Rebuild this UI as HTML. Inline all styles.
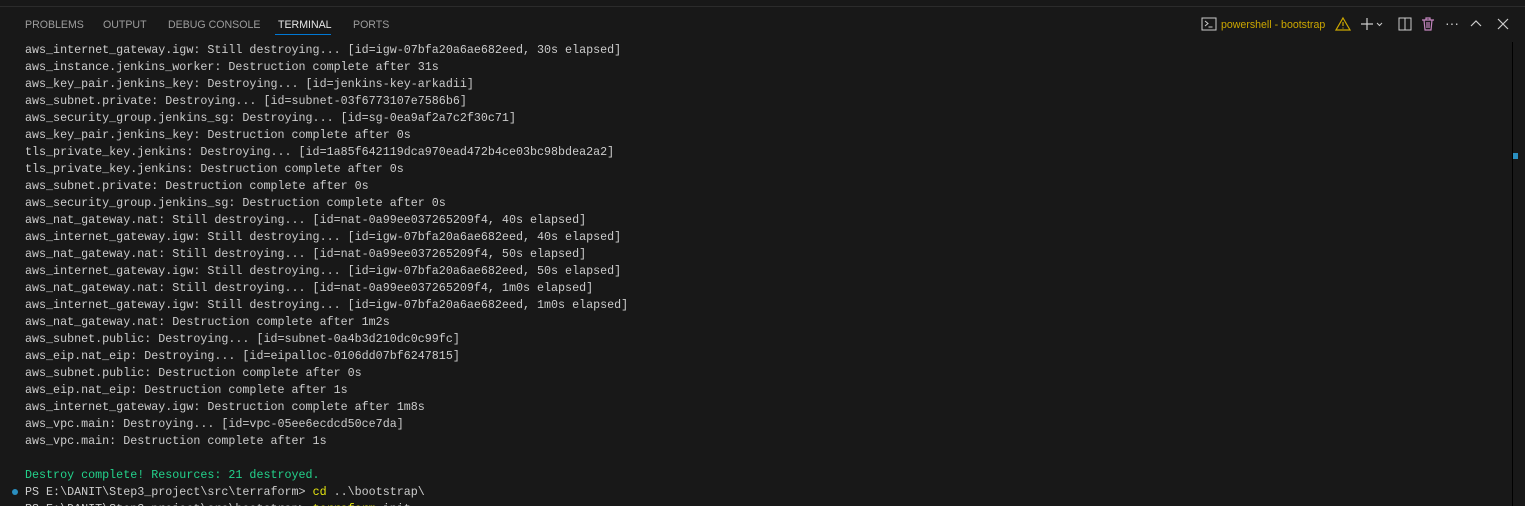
<!DOCTYPE html>
<html><head><meta charset="utf-8"><style>
html,body{margin:0;padding:0;background:#181818;width:1525px;height:506px;overflow:hidden;position:relative}
.top{position:absolute;left:0;top:0;width:1525px;height:6px;background:#181818;border-bottom:1px solid #2b2b2b}
.tab{position:absolute;top:19px;font:10.6px "Liberation Sans",sans-serif;color:#9d9d9d}
.act{color:#e7e7e7}
.ul{position:absolute;left:275px;top:34px;width:56px;height:1px;background:#0078d4}
.term{position:absolute;left:25px;top:42px;font:11.7px/17px "Liberation Mono",monospace;color:#cccccc;white-space:pre}
.g{color:#23d18b}.y{color:#e5e510}
.dot{position:absolute;left:12px;top:489px;width:6px;height:6px;border-radius:50%;background:#2a8fc0}
.dot2{position:absolute;left:12px;top:506px;width:6px;height:6px;border-radius:50%;background:#2a8fc0}
.sb{position:absolute;left:1512px;top:42px;width:1px;height:464px;background:#000}
.mk{position:absolute;left:1513px;top:153px;width:5px;height:6px;background:#2a8fc0}
.ic{position:absolute;top:16px}
</style></head><body>
<div class="top"></div>
<div class="tab" style="left:25px">PROBLEMS</div>
<div class="tab" style="left:103px">OUTPUT</div>
<div class="tab" style="left:168px">DEBUG CONSOLE</div>
<div class="tab act" style="left:278px">TERMINAL</div>
<div class="tab" style="left:353px">PORTS</div>
<div class="ul"></div>
<svg class="ic" style="left:1201px" width="16" height="16" viewBox="0 0 16 16"><rect x="1" y="2" width="14" height="12" fill="none" stroke="#ccc" stroke-width="1"/><path d="M4 5l3 2.5L4 10M7.5 11h4" stroke="#ccc" fill="none"/></svg>
<div class="tab" style="left:1221px;color:#cca700;font-size:10.6px">powershell - bootstrap</div>
<svg class="ic" style="left:1335px" width="16" height="16" viewBox="0 0 16 16"><path d="M8 2L15 14H1Z" fill="none" stroke="#cca700" stroke-width="1.2"/><path d="M8 6v4M8 11.5v1" stroke="#cca700" stroke-width="1.2"/></svg>
<svg class="ic" style="left:1359px" width="30" height="16" viewBox="0 0 30 16"><path d="M8 2v12M2 8h12" stroke="#ccc" stroke-width="1.2"/><path d="M18 7l2.5 2.5L23 7" stroke="#ccc" fill="none"/></svg>
<svg class="ic" style="left:1397px" width="16" height="16" viewBox="0 0 16 16"><rect x="2" y="2" width="12" height="12" fill="none" stroke="#ccc"/><path d="M8 2v12" stroke="#ccc"/></svg>
<svg class="ic" style="left:1420px" width="16" height="16" viewBox="0 0 16 16"><path d="M2 4h12M6 4V2h4v2M4 4l1 10h6l1-10M7 6v6M9 6v6" stroke="#c586c0" fill="none" stroke-width="1.2"/></svg>
<div class="tab" style="left:1445px;color:#ccc;top:15px;font-size:14px">···</div>
<svg class="ic" style="left:1468px" width="16" height="16" viewBox="0 0 16 16"><path d="M3 10l5-5 5 5" stroke="#ccc" fill="none" stroke-width="1.2"/></svg>
<svg class="ic" style="left:1495px" width="16" height="16" viewBox="0 0 16 16"><path d="M3 3l10 10M13 3L3 13" stroke="#ccc" stroke-width="1.2"/></svg>
<div class="sb"></div><div class="mk"></div>
<div class="dot"></div><div class="dot2"></div>
<div class="term">aws_internet_gateway.igw: Still destroying... [id=igw-07bfa20a6ae682eed, 30s elapsed]
aws_instance.jenkins_worker: Destruction complete after 31s
aws_key_pair.jenkins_key: Destroying... [id=jenkins-key-arkadii]
aws_subnet.private: Destroying... [id=subnet-03f6773107e7586b6]
aws_security_group.jenkins_sg: Destroying... [id=sg-0ea9af2a7c2f30c71]
aws_key_pair.jenkins_key: Destruction complete after 0s
tls_private_key.jenkins: Destroying... [id=1a85f642119dca970ead472b4ce03bc98bdea2a2]
tls_private_key.jenkins: Destruction complete after 0s
aws_subnet.private: Destruction complete after 0s
aws_security_group.jenkins_sg: Destruction complete after 0s
aws_nat_gateway.nat: Still destroying... [id=nat-0a99ee037265209f4, 40s elapsed]
aws_internet_gateway.igw: Still destroying... [id=igw-07bfa20a6ae682eed, 40s elapsed]
aws_nat_gateway.nat: Still destroying... [id=nat-0a99ee037265209f4, 50s elapsed]
aws_internet_gateway.igw: Still destroying... [id=igw-07bfa20a6ae682eed, 50s elapsed]
aws_nat_gateway.nat: Still destroying... [id=nat-0a99ee037265209f4, 1m0s elapsed]
aws_internet_gateway.igw: Still destroying... [id=igw-07bfa20a6ae682eed, 1m0s elapsed]
aws_nat_gateway.nat: Destruction complete after 1m2s
aws_subnet.public: Destroying... [id=subnet-0a4b3d210dc0c99fc]
aws_eip.nat_eip: Destroying... [id=eipalloc-0106dd07bf6247815]
aws_subnet.public: Destruction complete after 0s
aws_eip.nat_eip: Destruction complete after 1s
aws_internet_gateway.igw: Destruction complete after 1m8s
aws_vpc.main: Destroying... [id=vpc-05ee6ecdcd50ce7da]
aws_vpc.main: Destruction complete after 1s

<span class="g">Destroy complete! Resources: 21 destroyed.</span>
PS E:\DANIT\Step3_project\src\terraform&gt; <span class="y">cd</span> ..\bootstrap\
PS E:\DANIT\Step3_project\src\bootstrap&gt; <span class="y">terraform</span> init</div>
</body></html>
